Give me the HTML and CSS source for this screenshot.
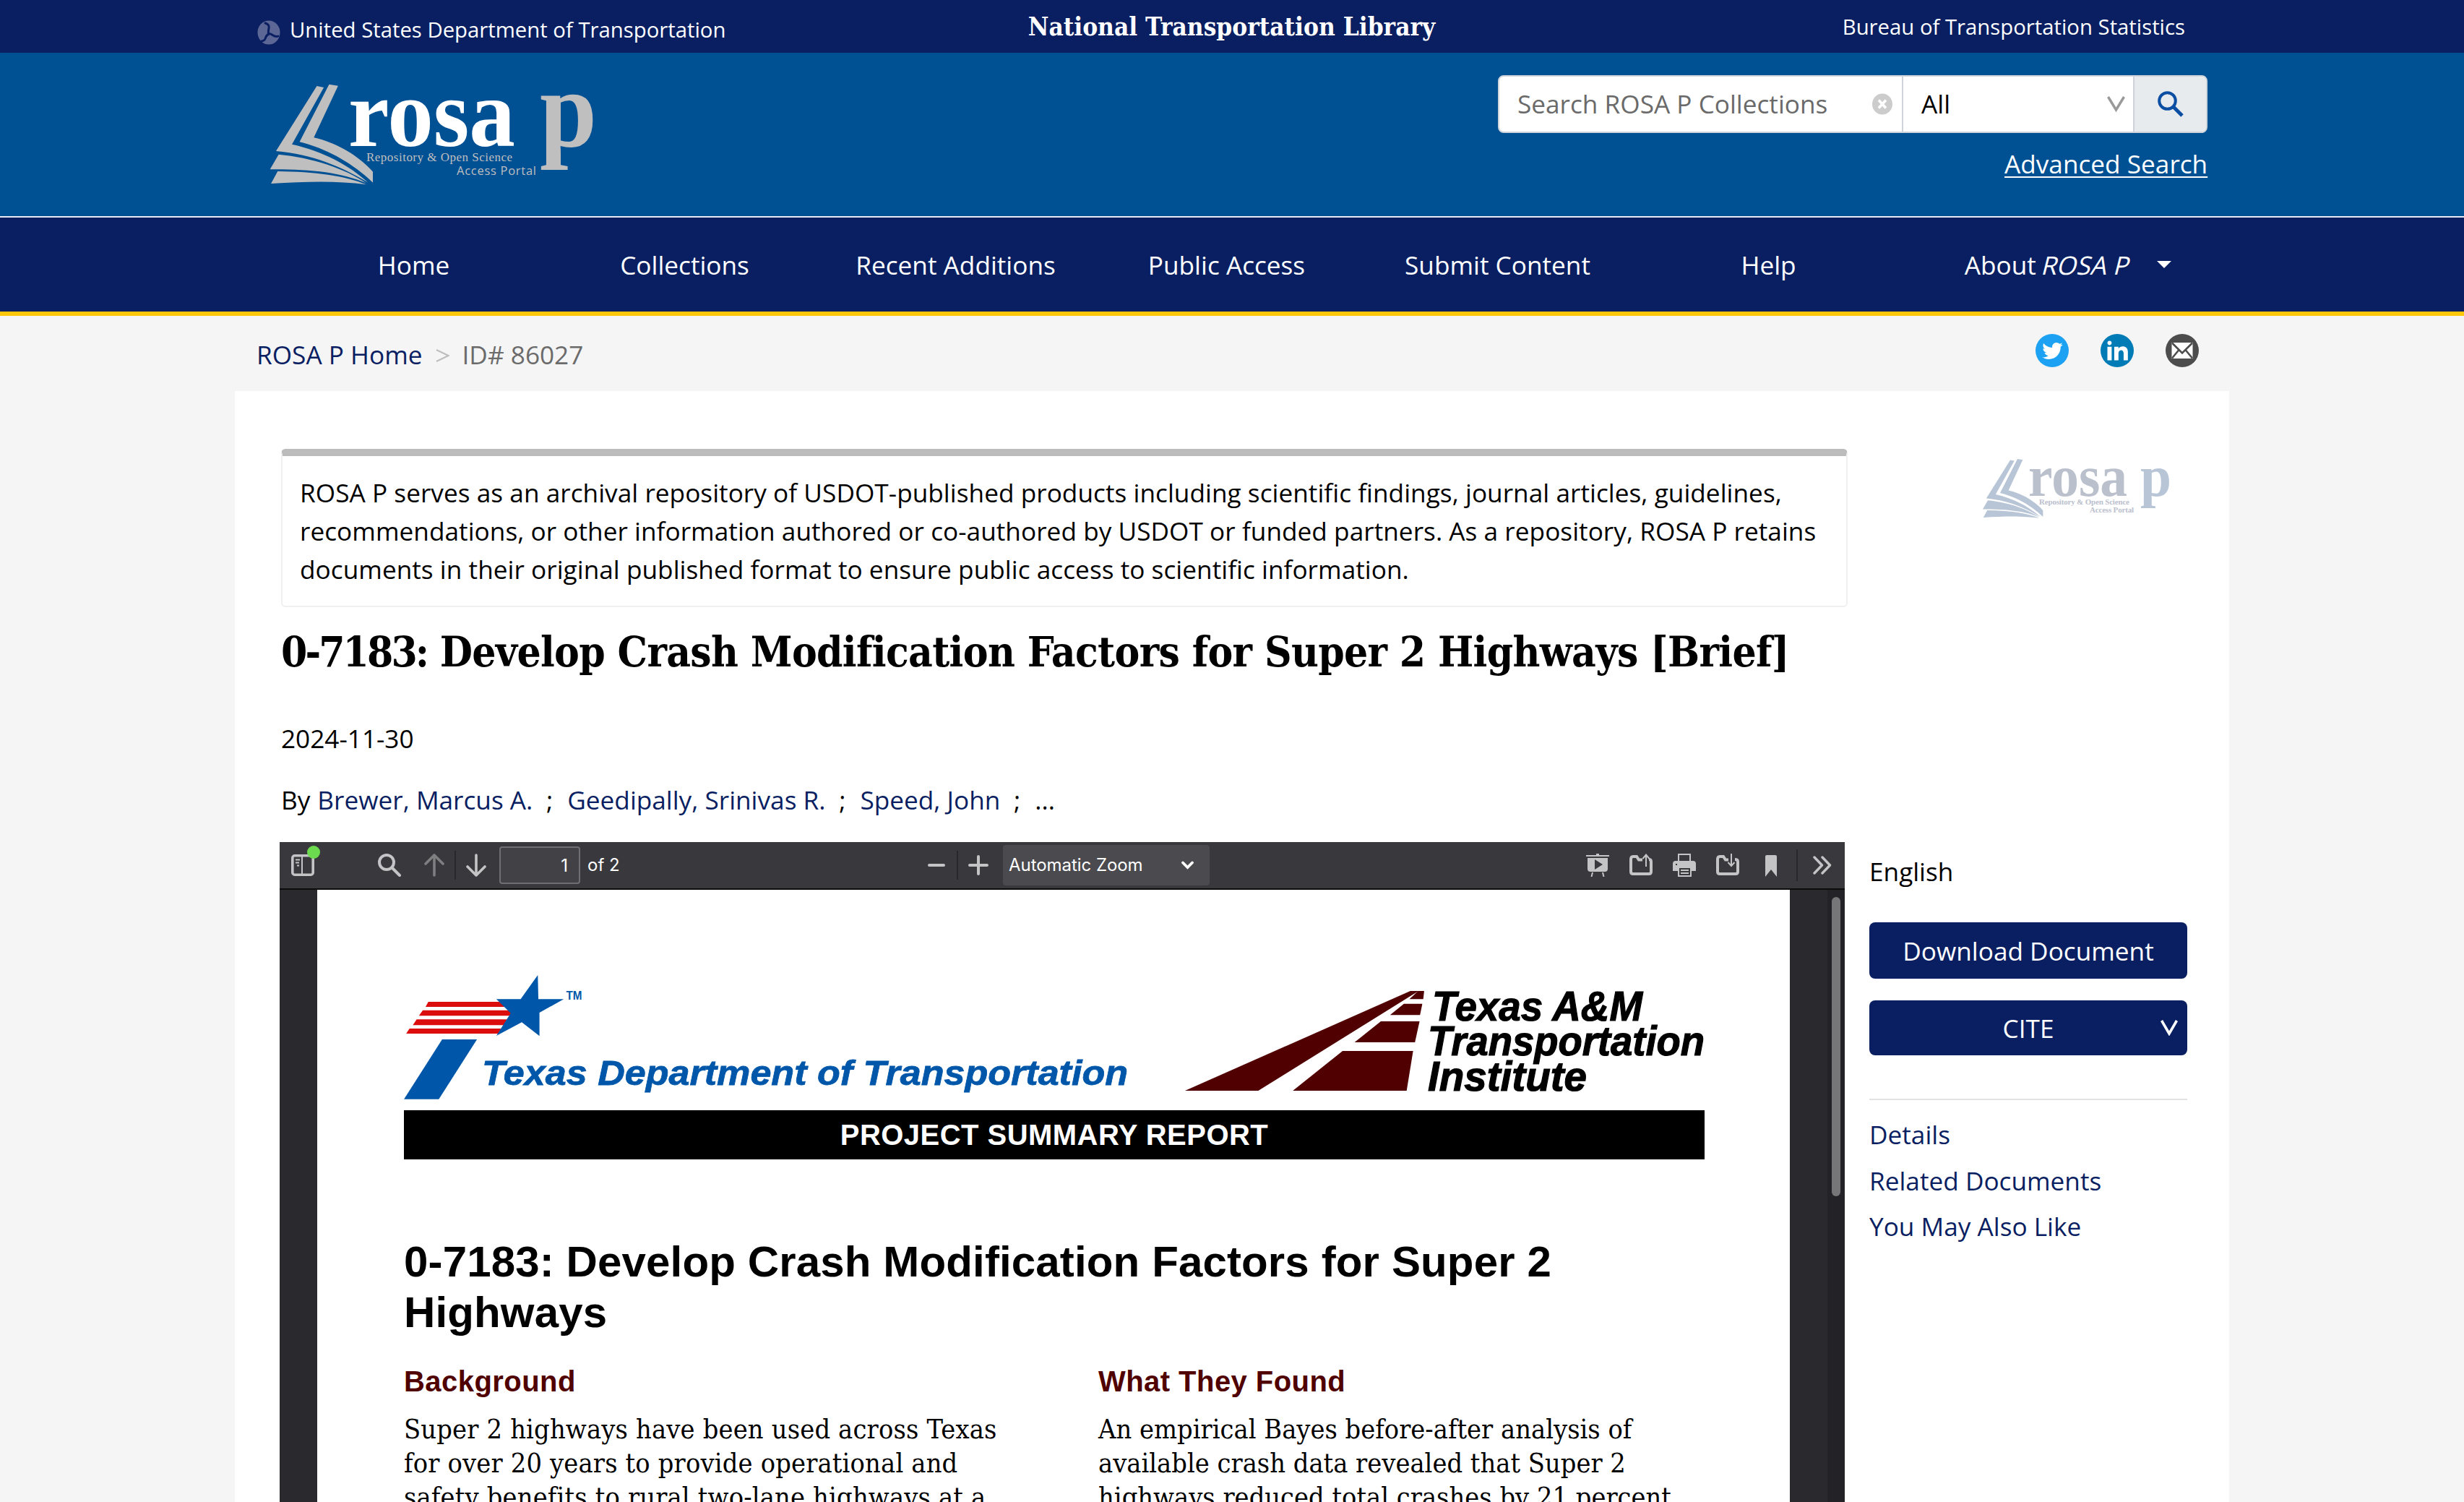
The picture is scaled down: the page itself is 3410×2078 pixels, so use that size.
FILE: index.html
```html
<!DOCTYPE html>
<html lang="en">
<head>
<meta charset="utf-8">
<title>0-7183: Develop Crash Modification Factors for Super 2 Highways [Brief]</title>
<link rel="stylesheet" href="styles.css">
</head>
<body>
<svg class="defs" width="0" height="0" aria-hidden="true">
  <symbol id="book" viewBox="117 350 310 417" preserveAspectRatio="none">
    <path d="M295 350 322 356 249 571C318 592 385 648 427 713V758C368 680 290 617 206 589Z"/>
    <path d="M258 357 279 363 183 599C275 627 355 685 412 757C330 690 245 641 135 627Z"/>
    <path d="M143 641C240 653 345 700 407 760C330 715 240 702 117 703Z"/>
    <path d="M140 711C250 712 345 730 407 766C320 750 230 753 120 762Z"/>
  </symbol>
</svg>

<div class="topbar">
  <div class="wrap topbar-row">
    <a class="dot-link">
      <svg class="dot-icon" viewBox="0 0 32 34"><ellipse cx="16" cy="17" rx="15.5" ry="16.5"/><g fill="none" stroke="#0a1f62" stroke-width="3" stroke-linecap="round"><path d="M11 4C21 7 13 14 16 19"/><path d="M16 19C20 17 23 25 29 22"/><path d="M16 19C9 22 14 28 6 29"/></g></svg>
      <span>United States Department of Transportation</span>
    </a>
    <strong class="ntl">National Transportation Library</strong>
    <a class="bts">Bureau of Transportation Statistics</a>
  </div>
</div>

<header class="header">
  <div class="wrap header-row">
    <svg class="logo" viewBox="356 73 520 226">
      <use href="#book" x="373.7" y="116.7" width="142.4" height="139" fill="#bfbfbf"/>
      <text class="times b" x="482" y="201.5" font-size="134" fill="#fff" textLength="231" lengthAdjust="spacingAndGlyphs">rosa</text>
      <text class="times b" x="747" y="201.5" font-size="153" fill="#bfbfbf" textLength="79" lengthAdjust="spacingAndGlyphs">p</text>
      <text class="times" x="507" y="223" font-size="17" fill="#bfbfbf" textLength="202" lengthAdjust="spacing">Repository &amp; Open Science</text>
      <text class="sans" x="632" y="242" font-size="16.5" fill="#bfbfbf" textLength="110" lengthAdjust="spacing">Access Portal</text>
    </svg>
    <div class="search">
      <div class="search-box">
        <div class="field"><span>Search ROSA P Collections</span>
          <svg width="28" height="30" viewBox="0 0 28 30"><ellipse cx="14" cy="15" rx="14" ry="14.5" fill="#ccc"/><path d="M9 9.5 19 20.5M19 9.5 9 20.5" stroke="#fff" stroke-width="3.6"/></svg></div>
        <div class="scope"><span>All</span>
          <svg width="25" height="22" viewBox="0 0 25 22"><path d="M1.500 1 12.500 19 23.500 1" fill="none" stroke="#999" stroke-width="3.400"/></svg></div>
        <button class="go" aria-label="Search"><svg width="36" height="36" viewBox="0 0 36 36" fill="none" stroke="#0b4ea2"><circle cx="13.500" cy="13.500" r="11.300" stroke-width="4"/><path d="M22 22 34 34" stroke-width="5"/></svg></button>
      </div>
      <a class="advanced">Advanced Search</a>
    </div>
  </div>
</header>

<nav class="nav">
  <div class="nav-row">
    <a>Home</a><a>Collections</a><a>Recent Additions</a><a>Public Access</a><a>Submit Content</a><a>Help</a>
    <a class="about">About <i>ROSA P</i><span class="caret"></span></a>
  </div>
</nav>

<div class="wrap crumbs">
  <a>ROSA P Home</a>
  <svg width="19" height="18" viewBox="0 0 19 18"><path d="M1 1 17.500 9 1 17" fill="none" stroke="#bdbdbd" stroke-width="2"/></svg>
  <span class="crumb-id">ID# 86027</span>
  <div class="social">
    <svg viewBox="0 0 46 46"><circle cx="23" cy="23" r="23" fill="#1da1f2"/><path transform="translate(9.300 9.300) scale(1.180)" fill="#fff" d="M24 4.557c-.883.392-1.832.656-2.828.775 1.017-.609 1.798-1.574 2.165-2.724-.951.564-2.005.974-3.127 1.195-.897-.957-2.178-1.555-3.594-1.555-3.179 0-5.515 2.966-4.797 6.045-4.091-.205-7.719-2.165-10.148-5.144-1.290 2.213-.669 5.108 1.523 6.574-.806-.026-1.566-.247-2.229-.616-.054 2.281 1.581 4.415 3.949 4.890-.693.188-1.452.232-2.224.084.626 1.956 2.444 3.379 4.600 3.419-2.070 1.623-4.678 2.348-7.290 2.040 2.179 1.397 4.768 2.212 7.548 2.212 9.142 0 14.307-7.721 13.995-14.646.962-.695 1.797-1.562 2.457-2.549z"/></svg>
    <svg viewBox="0 0 46 46"><circle cx="23" cy="23" r="23" fill="#007bb6"/><path transform="translate(9.500 8.300) scale(1.180)" fill="#fff" d="M4.980 3.500c0 1.381-1.110 2.500-2.480 2.500s-2.480-1.119-2.480-2.500c0-1.380 1.110-2.500 2.480-2.500s2.480 1.120 2.480 2.500zm.02 4.500h-5v16h5v-16zm7.982 0h-4.968v16h4.969v-8.399c0-4.670 6.029-5.052 6.029 0v8.399h4.988v-10.131c0-7.880-8.922-7.593-11.018-3.714v-2.155z"/></svg>
    <svg viewBox="0 0 46 46"><circle cx="23" cy="23" r="23" fill="#4d4d4d"/><rect x="8.500" y="12" width="29" height="22" fill="#fff"/><path d="M9 12.500 23 26.500 37 12.500M9 33.500 18.500 22M37 33.500 27.500 22" fill="none" stroke="#4d4d4d" stroke-width="2.600"/></svg>
  </div>
</div>

<main class="wrap card">
  <section class="content">
    <p class="notice">ROSA P serves as an archival repository of USDOT-published products including scientific findings, journal articles, guidelines,<br>recommendations, or other information authored or co-authored by USDOT or funded partners. As a repository, ROSA P retains<br>documents in their original published format to ensure public access to scientific information.</p>
    <h1><span class="report-no">0-7183:</span> Develop Crash Modification Factors for Super 2 Highways [Brief]</h1>
    <p class="date">2024-11-30</p>
    <p class="authors"><span class="by">By</span><a>Brewer, Marcus A.</a><span class="sep">;</span><a>Geedipally, Srinivas R.</a><span class="sep">;</span><a>Speed, John</a><span class="sep">;</span><span>...</span></p>

    <div class="viewer">
      <div class="toolbar">
        <div class="tb-toggle"><svg width="32" height="30" viewBox="0 0 32 30" fill="none" stroke="#c4c4c6"><rect x="1.800" y="1.800" width="28.400" height="26.400" rx="3" stroke-width="3.600"/><path d="M15 3V27M6 7.500H12M6 11.500H11M8 15.500H11" stroke-width="2"/></svg><i class="tb-badge"></i></div>
        <svg class="tb-find" width="32" height="32" viewBox="0 0 32 32" fill="none" stroke="#c4c4c6" stroke-width="4" stroke-linecap="round"><circle cx="12" cy="12" r="10"/><path d="M20 20 30 30"/></svg>
        <svg class="tb-up" width="28" height="32" viewBox="0 0 28 32" fill="none" stroke="#7f7f82" stroke-width="3.600" stroke-linecap="round" stroke-linejoin="round"><path d="M14 30V2M2 14 14 2 26 14"/></svg>
        <i class="tb-sep"></i>
        <svg width="28" height="32" viewBox="0 0 28 32" fill="none" stroke="#c4c4c6" stroke-width="3.600" stroke-linecap="round" stroke-linejoin="round"><path d="M14 2V30M2 18 14 30 26 18"/></svg>
        <span class="tb-page">1</span>
        <span class="tb-count">of 2</span>
        <svg width="24" height="28" viewBox="0 0 24 28"><path d="M2 14H22" stroke="#c4c4c6" stroke-width="4" stroke-linecap="round"/></svg>
        <i class="tb-sep tb-sep-zoom"></i>
        <svg width="28" height="28" viewBox="0 0 28 28"><path d="M2 14H26M14 2V26" stroke="#c4c4c6" stroke-width="4" stroke-linecap="round"/></svg>
        <div class="tb-zoom"><span>Automatic Zoom</span><svg width="17" height="12" viewBox="0 0 17 12"><path d="M2 2.500 8.500 9 15 2.500" fill="none" stroke="#fff" stroke-width="3.800" stroke-linecap="round"/></svg></div>
        <div class="tb-right">
          <svg width="32" height="32" viewBox="0 0 32 32" fill="#c4c4c6"><path fill-rule="evenodd" d="M14 0h4v2h14v2H0V2h14ZM2 6h28v15a4 4 0 0 1-4 4H6a4 4 0 0 1-4-4ZM12 8v14l11-7Z"/><path d="M9 26 7.500 32M23 26 24.500 32" stroke="#c4c4c6" stroke-width="2"/></svg>
          <svg width="32" height="32" viewBox="0 0 32 32" fill="none" stroke="#c4c4c6"><path d="M18 8.500H13L10 4H5Q2 4 2 8V25Q2 28 5 28H27Q30 28 30 25V11Q30 8 27 8" stroke-width="4"/><path d="M23 18V2M18.500 7 23 1.500 27.500 7" stroke-width="2"/></svg>
          <svg width="32" height="32" viewBox="0 0 32 32" fill="#c4c4c6"><path d="M8 11V1H24V11" fill="none" stroke="#c4c4c6" stroke-width="2"/><path fill-rule="evenodd" d="M4 10H28Q32 10 32 14V24H26V32H7V24H0V14Q0 10 4 10ZM9 20V30H24V20ZM4 14V16H6V14Z"/><path d="M11 22H22V24H11ZM11 26H22V28H11Z"/></svg>
          <svg width="32" height="32" viewBox="0 0 32 32" fill="none" stroke="#c4c4c6"><path d="M17 8.500H13L10 4H5Q2 4 2 8V25Q2 28 5 28H27Q30 28 30 25V11Q30 8 26 8" stroke-width="4"/><path d="M21 0V16M16.500 12 21 17 25.500 12" stroke-width="2"/></svg>
          <svg class="tb-mark" width="16" height="32" viewBox="0 0 16 32"><path d="M2 2H14Q16 2 16 4V32L8 22 0 32V4Q0 2 2 2Z" fill="#c4c4c6"/></svg>
          <i class="tb-sep tb-sep-end"></i>
          <svg width="26" height="26" viewBox="0 0 26 26"><path d="M2 2 12.500 13 2 24M13 2 23.500 13 13 24" fill="none" stroke="#c4c4c6" stroke-width="3.400" stroke-linecap="round" stroke-linejoin="round"/></svg>
        </div>
      </div>

      <div class="pdf-area">
        <article class="pdf-page">
          <svg class="pdf-logos" viewBox="439 1231 2038 305">
            <g transform="translate(380 1150) scale(.7653 .33333)">
              <g fill="#dc0d0d"><path d="M278 708H415L420 729H273Z"/><path d="M268 743H430L426 766H261Z"/><path d="M257 781H424L418 805H250Z"/><path d="M244 819H410L404 840H238Z"/></g>
              <g fill="#0057a9"><path d="M303 864H366L297 1112H234Z"/><path d="M476 597 477 697H523L479 753 479 850 447 793 401 849 427 755 401 697H445Z"/></g>
            </g>
            <text class="arial b" x="783.500" y="1383" font-size="16" fill="#0057a9" textLength="22" lengthAdjust="spacingAndGlyphs">TM</text>
            <text class="arial b i txdot" x="667" y="1500.500" font-size="49" textLength="894" lengthAdjust="spacingAndGlyphs">Texas Department of Transportation</text>
            <g fill="#500000" transform="translate(1580 1150) scale(.63776 .33333)">
              <path d="M583 663H601L253 1077H94Z"/><path d="M600 663H613L611 697H581Z"/><path d="M569 716H609L604 763H539Z"/><path d="M519 789H603L593 876H462Z"/><path d="M436 912H589L575 1077H328Z"/>
            </g>
            <g class="arial b i tti" font-size="57">
              <text x="1982" y="1411.500" textLength="291" lengthAdjust="spacingAndGlyphs">Texas A&amp;M</text>
              <text x="1976" y="1460" textLength="383" lengthAdjust="spacingAndGlyphs">Transportation</text>
              <text x="1976" y="1508.500" textLength="220" lengthAdjust="spacingAndGlyphs">Institute</text>
            </g>
          </svg>
          <div class="pdf-bar">PROJECT SUMMARY REPORT</div>
          <h2>0-7183: Develop Crash Modification Factors for Super 2<br>Highways</h2>
          <div class="pdf-cols">
            <div><h3>Background</h3><p>Super 2 highways have been used across Texas<br>for over 20 years to provide operational and<br>safety benefits to rural two-lane highways at a</p></div>
            <div class="found"><h3>What They Found</h3><p>An empirical Bayes before-after analysis of<br>available crash data revealed that Super 2<br>highways reduced total crashes by 21 percent</p></div>
          </div>
        </article>
        <div class="track"><i class="thumb"></i></div>
      </div>
    </div>
  </section>

  <aside class="side">
    <svg class="mark" viewBox="2740 630 270 90">
      <use href="#book" x="2744" y="635" width="83.600" height="82" fill="#b8c5d6"/>
      <text class="times b" x="2807" y="685.500" font-size="81" fill="#bbc0cd" textLength="137" lengthAdjust="spacingAndGlyphs">rosa</text>
      <text class="times b" x="2962" y="685.500" font-size="81" fill="#b8c5d6" textLength="43" lengthAdjust="spacingAndGlyphs">p</text>
      <text class="times b" x="2822" y="698" font-size="11" fill="#bbc0cd" textLength="125" lengthAdjust="spacing">Repository &amp; Open Science</text>
      <text class="times b" x="2892" y="709" font-size="11" fill="#bbc0cd" textLength="61" lengthAdjust="spacing">Access Portal</text>
    </svg>
    <p class="lang">English</p>
    <button class="btn download">Download Document</button>
    <button class="btn cite">CITE<svg width="24" height="22" viewBox="0 0 24 22"><path d="M1.500 1 12 19 22.500 1" fill="none" stroke="#fff" stroke-width="3.600"/></svg></button>
    <hr>
    <ul><li>Details</li><li>Related Documents</li><li>You May Also Like</li></ul>
  </aside>
</main>
</body>
</html>
```
FILE: styles.css
```css
* { box-sizing: border-box; }
html, body { margin: 0; height: 2078px; overflow: hidden; }
body {
  background: #f5f5f5;
  color: #000;
  font: 35.2px/53px "Open Sans", sans-serif;
}
h1, h2, h3, p, ul { margin: 0; padding: 0; font-weight: 400; }
ul { list-style: none; }
svg { display: block; flex: none; }
button { border: 0; padding: 0; font: inherit; }
.defs { position: absolute; }
.wrap { width: 2760px; margin-left: 325px; }
.times { font-family: "Liberation Serif", serif; }
.sans { font-family: "Open Sans", sans-serif; }
.arial { font-family: "Liberation Sans", sans-serif; }
.b { font-weight: 700; }
.i { font-style: italic; }

/* Department bar */
.topbar { height: 73px; background: #0a1f62; color: #fff; font-size: 29.3px; }
.topbar-row {
  height: 73px;
  display: grid;
  grid-template-columns: 1fr auto 1fr;
  align-items: center;
  padding: 0 61px 0 31px;
}
.dot-link { display: flex; align-items: center; gap: 13px; padding-top: 9px; }
.dot-icon { width: 32px; height: 34px; fill: #5c6796; margin-top: 8px; }
.ntl { font: 700 34.9px/53px "DejaVu Serif Condensed", "DejaVu Serif", serif; margin-left: 29px; }
.bts { text-align: right; padding-top: 1px; }

/* Logo and search */
.header { height: 228px; background: #005094; border-bottom: 2px solid #e6eaf2; }
.header-row { display: flex; justify-content: space-between; padding: 0 30px 0 31px; }
.logo { width: 520px; height: 226px; }
.search { width: 982px; padding-top: 31px; color: #fff; }
.search-box {
  display: flex;
  height: 80px;
  border: 2px solid #ced4da;
  border-radius: 8px;
  background: #fff;
  overflow: hidden;
}
.field { display: flex; align-items: center; justify-content: space-between; width: 557px; padding: 0 13px 1px 25px; color: #6a6a6a; }
.scope { display: flex; align-items: center; justify-content: space-between; width: 322px; padding: 0 11px 1px 25px; border: solid #ced4da; border-width: 0 2px; color: #000; }
.go { flex: 1; background: #e7ebee; padding-left: 32px; }
.advanced { display: block; width: 281px; margin: 16px 0 0 auto; text-decoration: underline; text-decoration-thickness: 1.5px; text-underline-offset: 4px; white-space: nowrap; }

/* Main navigation */
.nav { height: 136px; background: #0a1f62; border-bottom: 6px solid #ffc709; color: #fff; }
.nav-row { width: 2625px; height: 130px; margin-left: 385px; display: grid; grid-template-columns: repeat(7, 375px); align-items: center; text-align: center; }
.about { display: flex; justify-content: flex-end; align-items: center; padding-right: 5px; white-space: pre; }
.about i { font-style: normal; transform: skewX(-14deg); }
.caret { margin: -1px 0 0 37px; border: 10px solid transparent; border-top-color: #fff; border-bottom: 0; }

/* Breadcrumb row */
.crumbs { height: 104px; display: flex; align-items: center; padding: 2px 42px 0 30px; }
.crumbs a { color: #0a1f62; }
.crumbs > svg { margin: 3px 18px 0 18px; }
.crumb-id { color: #6b6b6b; }
.social { margin: -10px 0 0 auto; display: flex; gap: 44px; }
.social svg { width: 46px; height: 46px; }

/* Card */
.card { height: 1537px; background: #fff; display: flex; padding-left: 64px; }
.content { width: 2168px; padding-top: 80px; flex: none; }
.notice {
  height: 219px;
  border: 2px solid #f0f0f0;
  border-top: 10px solid #bcbcbc;
  border-radius: 6px;
  padding: 24px 0 0 24px;
  letter-spacing: .035px;
  white-space: nowrap;
}
h1 { margin-top: 22px; font: 700 58px/80px "DejaVu Serif Condensed", "DejaVu Serif", serif; letter-spacing: -.67px; white-space: nowrap; }
.report-no { letter-spacing: -2.9px; }
.date { margin-top: 53px; }
.authors { margin-top: 32px; display: flex; }
.authors a { color: #0a1f62; }
.by { margin-right: 10px; }
.sep { margin: 0 20px 0 18.7px; }

/* PDF viewer */
.viewer { width: 2166px; height: 913px; margin: 32px 0 0 -2px; background: #2a2a2e; }
.toolbar {
  height: 66px;
  display: flex;
  align-items: center;
  padding: 0 18px 0 16px;
  background: #38383d;
  border-bottom: 2px solid #0c0c0d;
  color: #fff;
  font: 24px/30px Inter, sans-serif;
}
.tb-toggle { position: relative; margin-right: 88px; }
.tb-badge { position: absolute; left: 22px; top: -12px; width: 18px; height: 18px; border-radius: 50%; background: #6cda4e; }
.tb-find { margin-right: 32px; }
.tb-sep { width: 2px; height: 40px; margin: 0 14px; background: #28282c; }
.tb-page { width: 112px; height: 52px; margin: 0 10px 0 18px; padding: 10px 15px 0 0; border: 2px solid #6f6f72; border-radius: 4px; background: #414146; text-align: right; line-height: 30px; }
.tb-count { width: 471px; }
.tb-sep-zoom { margin-left: 16px; }
.tb-zoom { width: 286px; height: 56px; margin-left: 20px; padding: 0 22px 0 8px; display: flex; align-items: center; justify-content: space-between; background: #4a4a4f; border-radius: 4px; letter-spacing: -.05px; }
.tb-right { margin-left: auto; display: flex; align-items: center; gap: 28px; }
.tb-mark { margin-left: 8px; }
.tb-sep-end { height: 44px; margin: 0 -7px 0 -1px; }
.pdf-area { display: flex; height: 847px; padding-left: 52px; overflow: hidden; }
.pdf-page { width: 2038px; background: #fff; }
.pdf-logos { width: 2038px; height: 305px; }
.txdot { fill: #0057a9; stroke: #0057a9; stroke-width: .8px; }
.tti { stroke: #000; stroke-width: 1.2px; }
.pdf-bar { height: 68px; margin: 0 118px 0 120px; background: #000; color: #fff; text-align: center; font: 700 40px/68px "Liberation Sans", sans-serif; letter-spacing: .46px; }
.pdf-page h2 { margin: 107px 0 0 120px; font: 700 60px/70px "Liberation Sans", sans-serif; letter-spacing: .14px; }
.pdf-cols { margin: 36px 0 0 120px; display: grid; grid-template-columns: 961px 1fr; white-space: nowrap; }
.pdf-cols h3 { color: #500000; font: 700 40px/48px "Liberation Sans", sans-serif; letter-spacing: .45px; }
.pdf-cols p { margin-top: 19px; font: 37.6px/47.2px "DejaVu Serif Condensed", "DejaVu Serif", serif; letter-spacing: .18px; }
.pdf-cols .found p { letter-spacing: .02px; }
.track { width: 24px; margin-left: 52px; padding: 10px 0 0 6px; background: #232327; }
.thumb { display: block; width: 12px; height: 414px; border-radius: 6px; background: #767678; }

/* Sidebar */
.side { width: 440px; margin-left: 30px; padding-top: 89px; }
.mark { width: 270px; height: 90px; margin-left: 153px; }
.lang { margin-top: 459px; }
.btn { display: flex; align-items: center; justify-content: center; width: 440px; background: #0a1f62; color: #fff; border-radius: 8px; }
.download { height: 78px; margin-top: 44px; }
.cite { position: relative; height: 76px; margin-top: 30px; }
.cite svg { position: absolute; right: 13px; top: 27px; }
hr { height: 2px; margin: 60px 0 16px; border: 0; background: #e2e2e2; }
.side li { height: 63.5px; line-height: 63.5px; color: #0a1f62; }
```
